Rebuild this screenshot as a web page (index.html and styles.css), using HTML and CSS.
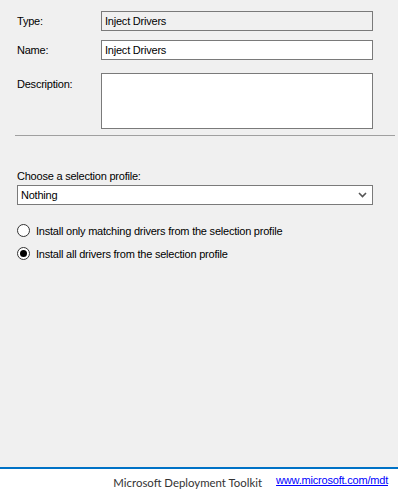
FILE: index.html
```html
<!DOCTYPE html>
<html lang="en">
<head>
  <meta charset="UTF-8">
  <meta name="viewport" content="width=device-width, initial-scale=1.0">
  <title>Inject Drivers</title>
  <link rel="stylesheet" href="styles.css">
</head>
<body>
  <div class="page">
    <div class="form">
      <div class="field type-row">
        <div class="label">Type:</div>
        <div class="box readonly">Inject Drivers</div>
      </div>
      <div class="field name-row">
        <div class="label">Name:</div>
        <div class="box">Inject Drivers</div>
      </div>
      <div class="field desc-row">
        <div class="label">Description:</div>
        <div class="box multiline"></div>
      </div>
    </div>
    <div class="separator"></div>

    <div class="options">
      <div class="choose-label">Choose a selection profile:</div>
      <div class="combo">
        <span>Nothing</span>
        <svg class="chevron" width="9" height="6" viewBox="0 0 9 6">
          <path d="M1 1 L4.5 4.5 L8 1" fill="none" stroke="#555" stroke-width="1.6"/>
        </svg>
      </div>
      <div class="radio-row first">
        <span class="radio"></span>
        <span>Install only matching drivers from the selection profile</span>
      </div>
      <div class="radio-row">
        <span class="radio checked"></span>
        <span>Install all drivers from the selection profile</span>
      </div>
    </div>

    <div class="footer">
      <span class="brand">Microsoft Deployment Toolkit</span>
      <a class="link" href="#">www.microsoft.com/mdt</a>
    </div>
  </div>
</body>
</html>
```

FILE: styles.css
```css
body {
  margin: 0;
  font-family: "Liberation Sans", Arial, sans-serif;
  font-size: 11px;
  letter-spacing: -0.22px;
  color: #000;
  background-color: #f0f0f0;
}
.page {
  display: flex;
  flex-direction: column;
  height: 492px;
}
.form {
  padding: 11px 25px 0 17px;
}
.field {
  display: flex;
}
.name-row {
  margin-top: 9px;
}
.desc-row {
  margin-top: 13px;
}
.label {
  width: 84px;
  padding-top: 4px;
}
.desc-row .label {
  padding-top: 5px;
}
.box {
  flex: 1;
  height: 18px;
  line-height: 18px;
  padding-left: 3px;
  background-color: #fff;
  border: 1px solid #7a7a7a;
}
.box.readonly {
  background-color: #f0f0f0;
}
.box.multiline {
  height: 54px;
}
.separator {
  margin: 6px 3px 0 15px;
  height: 1px;
  background-color: #a0a0a0;
}
.options {
  padding: 34px 25px 0 17px;
}
.choose-label {
  height: 15px;
}
.combo {
  display: flex;
  align-items: center;
  justify-content: space-between;
  height: 18px;
  padding: 0 4px 0 3px;
  background-color: #fff;
  border: 1px solid #7a7a7a;
}
.chevron {
  margin-right: 1px;
}
.radio-row {
  display: flex;
  align-items: center;
  margin-top: 10px;
  height: 13px;
}
.radio-row.first {
  margin-top: 19px;
}
.radio {
  box-sizing: border-box;
  width: 13px;
  height: 13px;
  margin-right: 6px;
  border: 1px solid #333;
  border-radius: 50%;
  background-color: #fff;
  display: flex;
  align-items: center;
  justify-content: center;
}
.radio.checked::after {
  content: "";
  width: 7px;
  height: 7px;
  border-radius: 50%;
  background-color: #000;
}
.footer {
  margin-top: auto;
  height: 23px;
  border-top: 2px solid #0072c6;
  background-color: #fff;
  display: flex;
  align-items: center;
  justify-content: flex-end;
  padding-right: 10px;
  letter-spacing: 0;
}
.brand {
  font-family: Lato, sans-serif;
  font-size: 11.4px;
  color: #333;
  margin-right: 14px;
  padding-top: 3px;
}
.link {
  color: #0000ff;
  font-size: 11px;
  letter-spacing: -0.2px;
  padding-bottom: 1px;
}
```
